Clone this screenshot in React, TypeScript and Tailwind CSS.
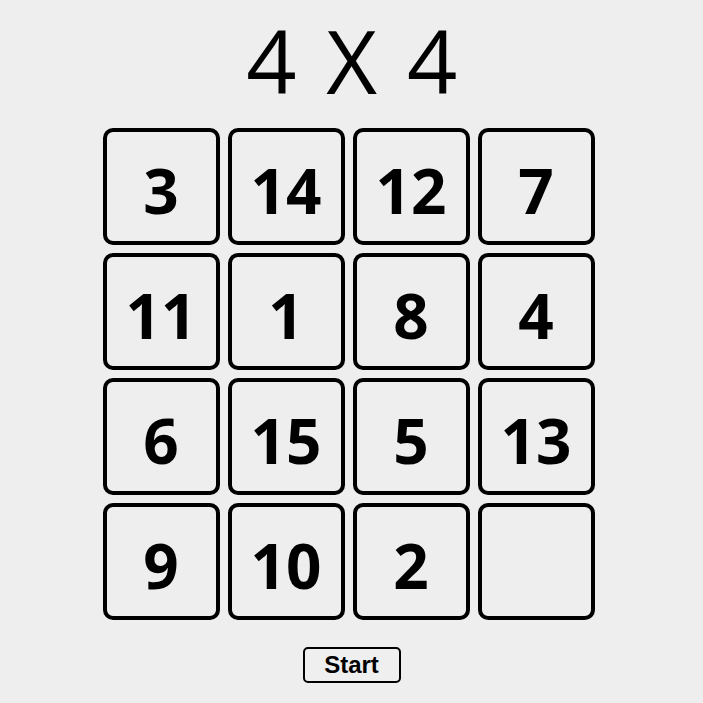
import React, { useState } from 'react';

const initial = [3, 14, 12, 7, 11, 1, 8, 4, 6, 15, 5, 13, 9, 10, 2, 0];

const App: React.FC = () => {
  const [tiles] = useState<number[]>(initial);

  return (
    <div className="w-full min-h-screen bg-[#eeeeee] flex flex-col items-center" style={{ fontFamily: '"Open Sans", sans-serif' }}>
      <h1 className="text-[88px] leading-[96px] font-normal text-black mt-[12px] mb-[20px] ml-[4px] tracking-[3.5px]">4 X 4</h1>

      <div className="grid grid-cols-[repeat(4,117px)] gap-[8px] mr-[6px]">
        {tiles.map((n, i) => (
          <div
            key={i}
            className="w-[117px] h-[117px] border-[4px] border-black rounded-[10px] flex items-center justify-center pt-[8px] text-[62px] font-bold text-black"
          >
            {n !== 0 ? n : ''}
          </div>
        ))}
      </div>

      <button
        className="mt-[27px] w-[98px] h-[36px] border-2 border-black rounded-[5px] bg-[#efefef] text-[24px] leading-none font-bold text-black"
        style={{ fontFamily: '"Liberation Sans", Arial, sans-serif' }}
      >
        Start
      </button>
    </div>
  );
};

export default App;
